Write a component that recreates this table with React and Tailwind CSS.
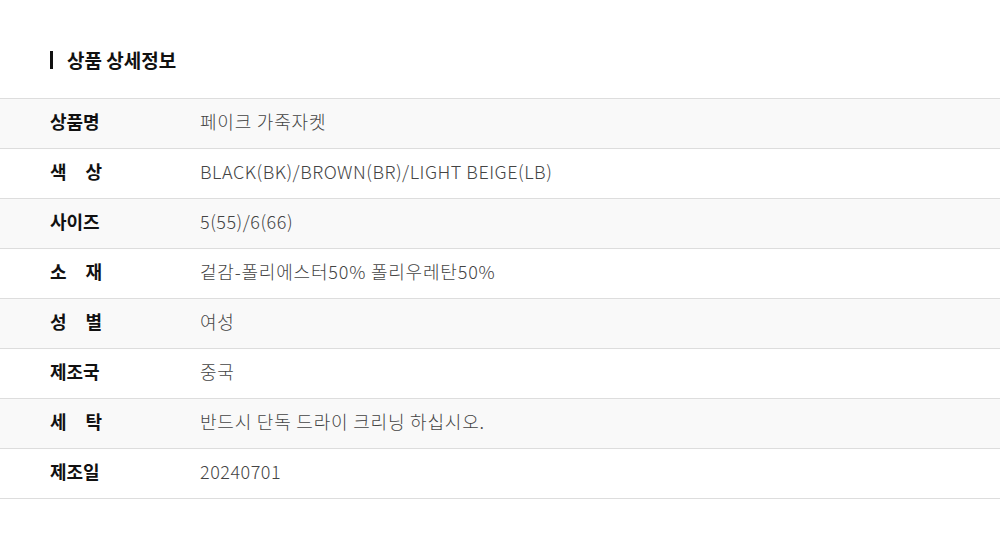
import React from 'react'

const rows = [
  { label: ['상품명'], value: '페이크 가죽자켓', ko: true },
  { label: ['색', '상'], value: 'BLACK(BK)/BROWN(BR)/LIGHT BEIGE(LB)' },
  { label: ['사이즈'], value: '5(55)/6(66)' },
  { label: ['소', '재'], value: '겉감-폴리에스터50% 폴리우레탄50%', ko: true },
  { label: ['성', '별'], value: '여성', ko: true },
  { label: ['제조국'], value: '중국', ko: true },
  { label: ['세', '탁'], value: '반드시 단독 드라이 크리닝 하십시오.', ko: true },
  { label: ['제조일'], value: '20240701' },
]

export default function App() {
  return (
    <div
      className="w-[1000px] h-[548px] bg-white"
      style={{ fontFamily: '"Noto Sans CJK KR", "Noto Sans", sans-serif' }}
    >
      <div className="pt-[49px] pl-[50px] flex items-center h-[98px] pb-[28px] box-border">
        <span className="w-[3px] h-[18px] bg-[#111]" />
        <h2 className="ml-[14px] text-[19px] font-bold text-[#111] leading-none">상품 상세정보</h2>
      </div>
      <div className="border-t border-[#dddddd]">
        {rows.map((row, i) => (
          <div
            key={i}
            className={`flex items-center h-[50px] pb-[4px] border-b border-[#dddddd] ${i % 2 === 0 ? 'bg-[#f9f9f9]' : 'bg-white'}`}
          >
            <div className="w-[200px] pl-[50px]">
              <div className="w-[52px] flex justify-between text-[18px] font-bold text-[#111]">
                {row.label.map((t, j) => (
                  <span key={j}>{t}</span>
                ))}
              </div>
            </div>
            <div className={`text-[18px] font-light text-[#444] ${row.ko ? 'tracking-[0.8px]' : 'tracking-[0.5px]'}`}>
              {row.value}
            </div>
          </div>
        ))}
      </div>
    </div>
  )
}
